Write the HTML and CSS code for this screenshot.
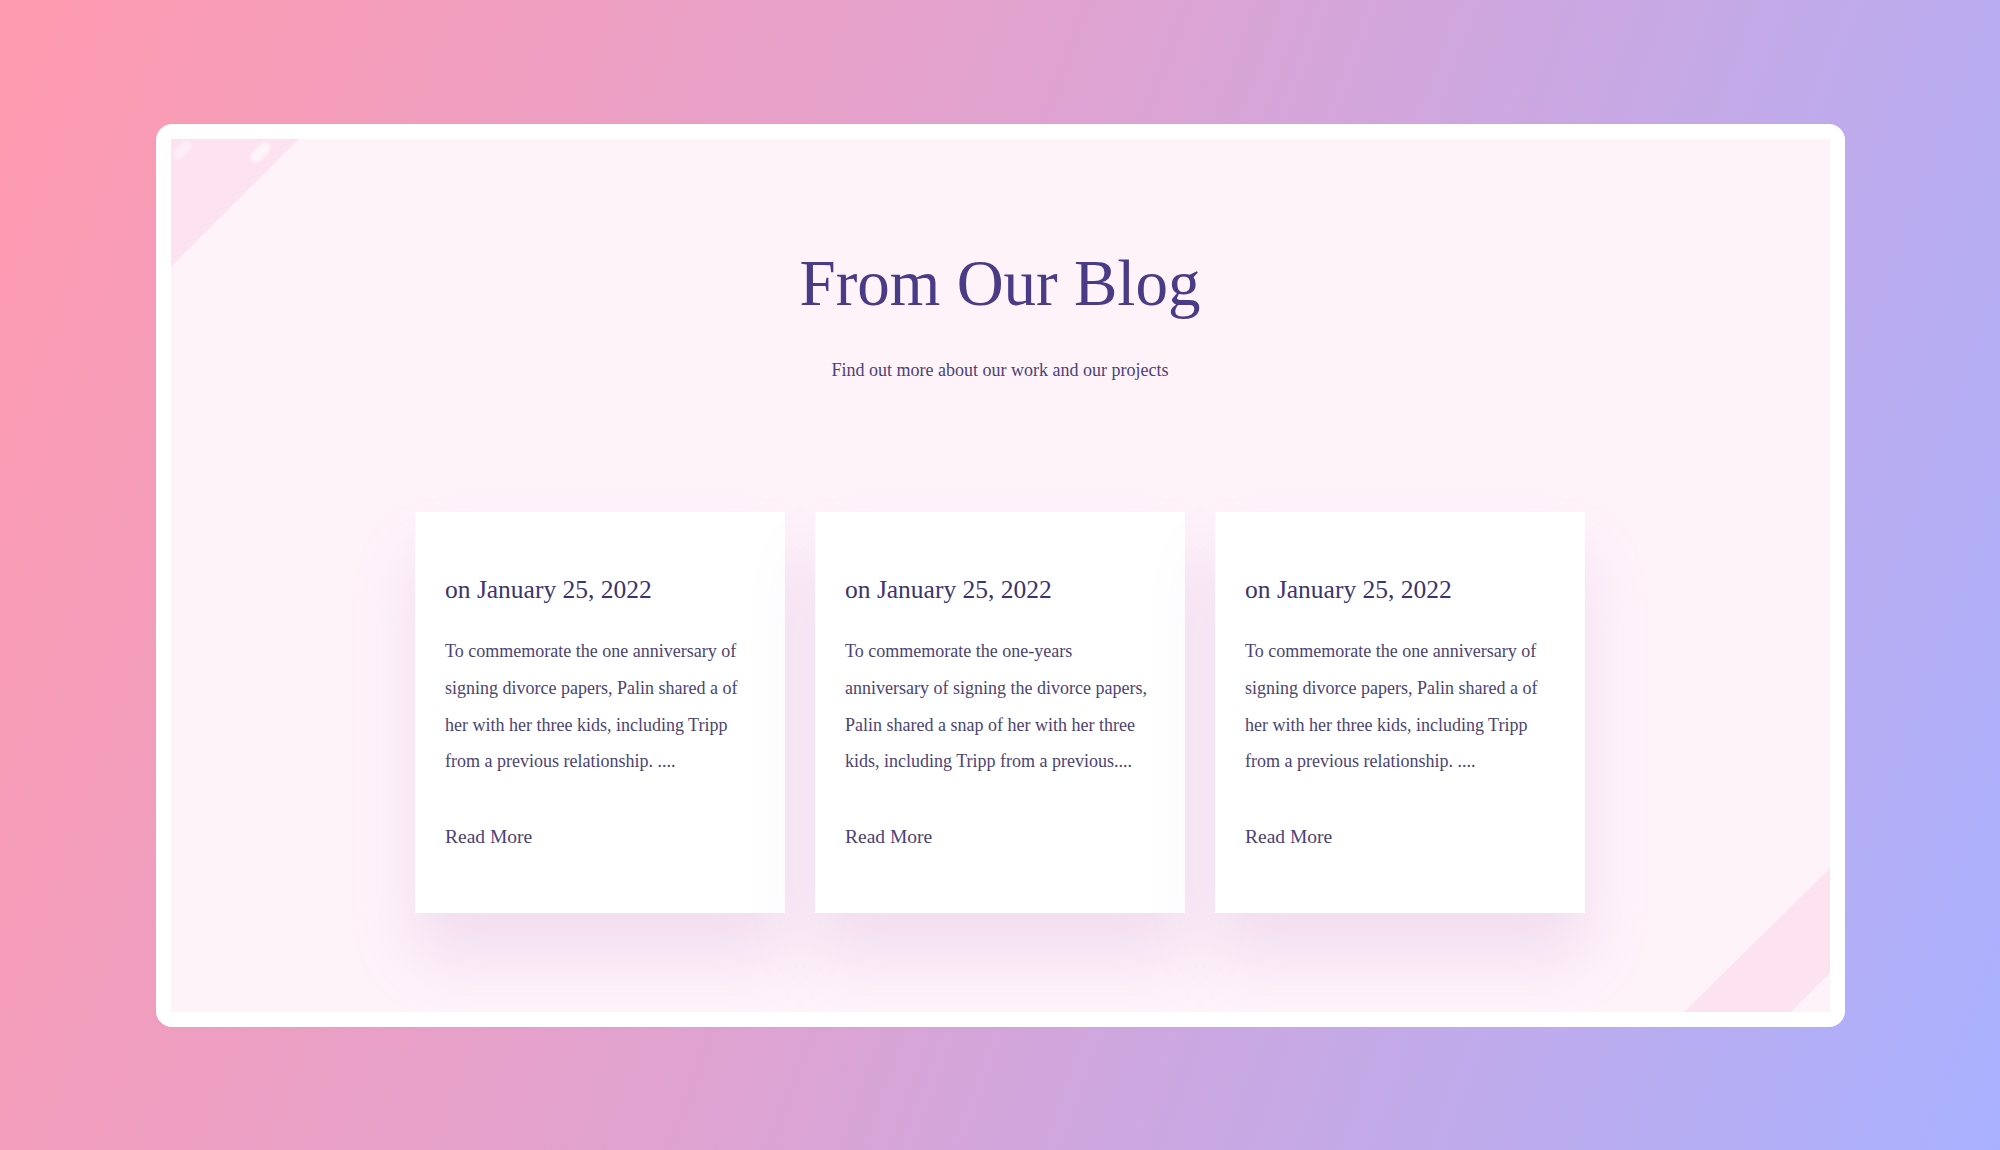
FILE: index.html
```html
<!DOCTYPE html>
<html lang="en">
<head>
  <meta charset="UTF-8">
  <title>From Our Blog</title>
  <meta name="viewport" content="width=device-width, initial-scale=1.0">
  <link rel="stylesheet" href="styles.css">
</head>
<body>

<div class="frame">
  <!-- corner stripes -->
  <svg class="deco deco-tl" width="140" height="140" viewBox="0 0 140 140">
    <defs>
      <filter id="soft" filterUnits="userSpaceOnUse" x="0" y="0" width="140" height="140">
        <feGaussianBlur stdDeviation="1.5"/>
      </filter>
    </defs>
    <polygon points="0,0 128,0 0,128" fill="#fde2f0"/>
    <g filter="url(#soft)" stroke="#fff" stroke-linecap="round">
      <line x1="94" y1="9" x2="85" y2="18" stroke-width="11" opacity="0.65"/>
      <line x1="16" y1="7" x2="8" y2="15" stroke-width="10" opacity="0.4"/>
    </g>
  </svg>
  <svg class="deco deco-br" width="150" height="150" viewBox="0 0 150 150">
    <polygon points="150,6 150,111 111,150 4,150" fill="#fde2f0"/>
  </svg>

  <div class="head">
    <h1>From Our Blog</h1>
    <p class="sub">Find out more about our work and our projects</p>
  </div>

  <div class="cards">
    <div class="card">
      <h3>on January 25, 2022</h3>
      <p>To commemorate the one anniversary of signing divorce papers, Palin shared a of her with her three kids, including Tripp from a previous relationship. ....</p>
      <a href="#" class="more">Read More</a>
    </div>
    <div class="card">
      <h3>on January 25, 2022</h3>
      <p>To commemorate the one-years anniversary of signing the divorce papers, Palin shared a snap of her with her three kids, including Tripp from a previous....</p>
      <a href="#" class="more">Read More</a>
    </div>
    <div class="card">
      <h3>on January 25, 2022</h3>
      <p>To commemorate the one anniversary of signing divorce papers, Palin shared a of her with her three kids, including Tripp from a previous relationship. ....</p>
      <a href="#" class="more">Read More</a>
    </div>
  </div>
</div>

</body>
</html>
```

FILE: styles.css
```css
body {
  margin: 0;
  min-height: 100vh;
  display: flex;
  align-items: center;
  justify-content: center;
  font-family: "Liberation Serif", "DejaVu Serif", serif;
  background: linear-gradient(110deg, #ff9aaf 0%, #dfa2d0 45%, #a9b1ff 100%);
}

.frame {
  position: relative;
  width: 1659px;
  height: 873px;
  border: 15px solid #fff;
  border-radius: 16px;
  background: #fff3fa;
  overflow: hidden;
}

.deco {
  position: absolute;
}

.deco-tl {
  top: 0;
  left: 0;
}

.deco-br {
  right: 0;
  bottom: 0;
}

.head {
  text-align: center;
  padding-top: 105px;
}

h1 {
  margin: 0;
  font-size: 65px;
  font-weight: normal;
  line-height: 1.2;
  color: #4a3b86;
}

.sub {
  margin: 35px 0 0;
  font-size: 18px;
  line-height: 1.5;
  color: #4b3f78;
}

.cards {
  display: flex;
  justify-content: center;
  gap: 30px;
  margin-top: 128px;
}

.card {
  width: 370px;
  height: 401px;
  box-sizing: border-box;
  padding: 63px 30px 0;
  background: #fff;
  box-shadow: 0 45px 60px rgba(175, 125, 200, 0.18);
}

.card h3 {
  margin: 0;
  font-size: 25.5px;
  font-weight: normal;
  line-height: 1.2;
  color: #3b3470;
}

.card p {
  margin: 28px 0 0;
  font-size: 18px;
  line-height: 36.7px;
  color: #4c4472;
}

.more {
  display: inline-block;
  margin-top: 45px;
  font-size: 19.5px;
  line-height: 1.2;
  color: #4a4274;
  text-decoration: none;
}
```
